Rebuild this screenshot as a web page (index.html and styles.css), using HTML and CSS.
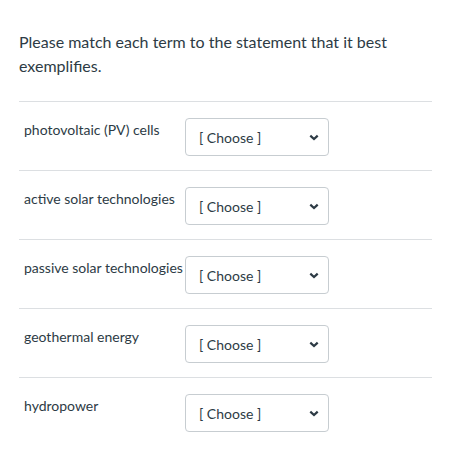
FILE: index.html
```html
<!DOCTYPE html>
<html>
<head>
<meta charset="utf-8">
<link rel="stylesheet" href="styles.css">
</head>
<body>
<div class="question">
  <p class="prompt">Please match each term to the statement that it best exemplifies.</p>
  <div class="matches">
    <div class="row">
      <label class="term">photovoltaic (PV) cells</label>
      <div class="select"><span class="value">[ Choose ]</span><svg class="chev" viewBox="0 0 10 7" width="10" height="7"><path d="M1.3 1.6 L5 5.1 L8.7 1.6" fill="none" stroke="#2d3b45" stroke-width="2.2"/></svg></div>
    </div>
    <div class="row">
      <label class="term">active solar technologies</label>
      <div class="select"><span class="value">[ Choose ]</span><svg class="chev" viewBox="0 0 10 7" width="10" height="7"><path d="M1.3 1.6 L5 5.1 L8.7 1.6" fill="none" stroke="#2d3b45" stroke-width="2.2"/></svg></div>
    </div>
    <div class="row">
      <label class="term">passive solar technologies</label>
      <div class="select"><span class="value">[ Choose ]</span><svg class="chev" viewBox="0 0 10 7" width="10" height="7"><path d="M1.3 1.6 L5 5.1 L8.7 1.6" fill="none" stroke="#2d3b45" stroke-width="2.2"/></svg></div>
    </div>
    <div class="row">
      <label class="term">geothermal energy</label>
      <div class="select"><span class="value">[ Choose ]</span><svg class="chev" viewBox="0 0 10 7" width="10" height="7"><path d="M1.3 1.6 L5 5.1 L8.7 1.6" fill="none" stroke="#2d3b45" stroke-width="2.2"/></svg></div>
    </div>
    <div class="row last">
      <label class="term">hydropower</label>
      <div class="select"><span class="value">[ Choose ]</span><svg class="chev" viewBox="0 0 10 7" width="10" height="7"><path d="M1.3 1.6 L5 5.1 L8.7 1.6" fill="none" stroke="#2d3b45" stroke-width="2.2"/></svg></div>
    </div>
  </div>
</div>
</body>
</html>
```

FILE: styles.css
```css
html, body {
  margin: 0;
  padding: 0;
  background: #ffffff;
}
body {
  font-family: Lato, "Open Sans", sans-serif;
  color: #2d3b45;
}
.question {
  padding: 30px 20px 0 19px;
  width: 413px;
}
.prompt {
  margin: 0 0 23px 0;
  font-size: 16px;
  line-height: 24px;
}
.matches {
  border-top: 1px solid #dcdfe2;
}
.row {
  display: grid;
  grid-template-columns: 161px 144px;
  align-items: start;
  padding: 16px 0 14px 5px;
  border-bottom: 1px solid #dcdfe2;
}
.row.last {
  border-bottom: none;
}
.term {
  font-size: 14px;
  line-height: 20px;
  padding-top: 2px;
  white-space: nowrap;
}
.select {
  box-sizing: border-box;
  height: 38px;
  border: 1px solid #c7cdd1;
  border-radius: 4px;
  display: flex;
  align-items: center;
  justify-content: space-between;
  padding: 0 9px 0 13px;
  background: #fff;
}
.value {
  font-size: 14px;
  color: #2d3b45;
}
.chev {
  display: block;
}
```
